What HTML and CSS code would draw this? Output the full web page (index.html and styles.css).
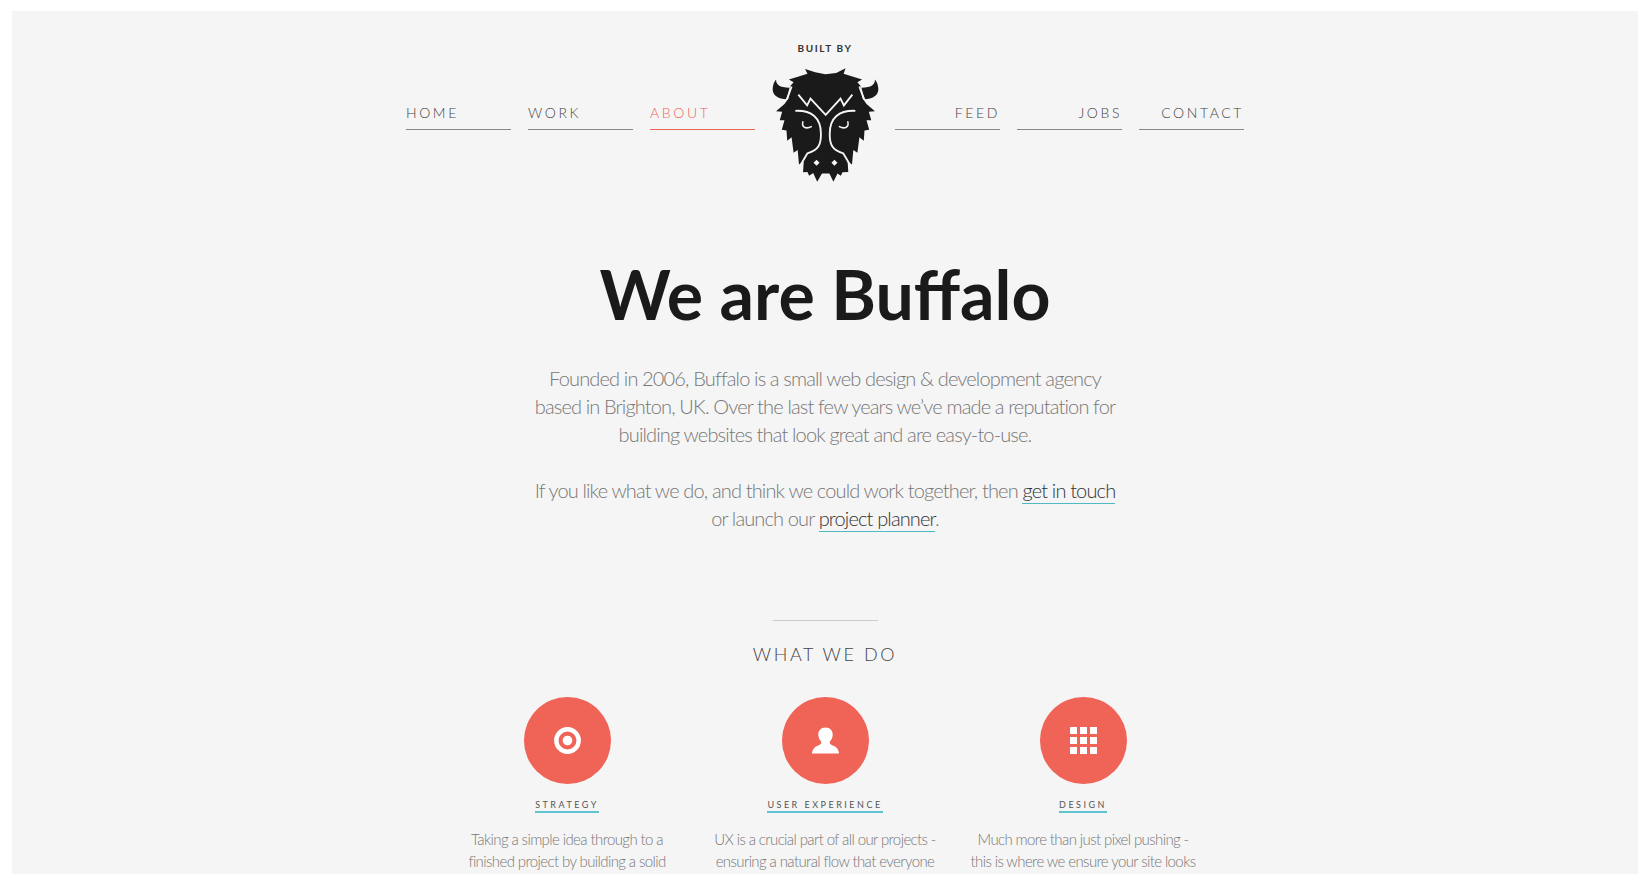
FILE: index.html
```html
<!DOCTYPE html>
<html lang="en">
<head>
    <meta charset="UTF-8">
    <meta name="viewport" content="width=device-width, initial-scale=1.0">
    <title>About - Buffalo</title>
    <link rel="stylesheet" href="styles.css">
</head>
<body>
    <div class="page">
        <!-- Main navigation, logo sits in the middle -->
        <header class="header">
            <nav class="nav nav-left">
                <a href="#">Home</a>
                <a href="#">Work</a>
                <a href="#" class="active">About</a>
            </nav>
            <div class="logo">
                <span class="built-by">Built by</span>
                <svg class="bison" viewBox="98 113 317 342" aria-hidden="true">
                    <path class="bison-fill" d="M196 118 L226 128 L256 134 L288 130 L316 116 L310 132 L336 140 L365 149 L351 157 L360 168 L366 205 L378 222 L403 243 L385 245 L392 270 L378 270 L386 298 L372 300 L370 331 L357 320 L351 366 L339 358 L335 401 L322 392 L324 423 L307 424 L302 434 L292 428 L280 452 L268 428 L246 428 L232 452 L220 426 L208 434 L203 423 L190 424 L192 392 L178 401 L174 358 L162 366 L156 320 L143 331 L141 300 L127 298 L135 270 L121 270 L128 245 L110 243 L135 222 L147 205 L153 168 L162 157 L148 149 L177 140 L203 132 Z"/>
                    <path class="bison-fill" d="M110 149 C110 165 120 172 150 174 L141 208 C118 206 100 198 100 178 C100 166 104 156 110 149 Z"/>
                    <path class="bison-fill" d="M403 149 C403 165 393 172 363 174 L372 208 C395 206 413 198 413 178 C413 166 409 156 403 149 Z"/>
                    <path class="bison-line" d="M156 170 C151 185 147 197 141 209"/>
                    <path class="bison-line" d="M357 170 C362 185 366 197 372 209"/>
                    <path class="bison-line" d="M176 194 L202 226 L212 206 L257 254 L301 206 L311 226 L336 194"/>
                    <path class="bison-line" d="M167 242 C215 240 243 262 243 310 C243 340 238 358 203 368 L183 402"/>
                    <path class="bison-line" d="M345 242 C297 240 269 262 269 310 C269 340 274 358 309 368 L329 402"/>
                    <path class="bison-line thin" d="M190 273 C184 290 198 298 216 288"/>
                    <path class="bison-line thin" d="M322 273 C328 290 314 298 296 288"/>
                    <path class="bison-dot" d="M230 387 L239 396 L230 405 L221 396 Z"/>
                    <path class="bison-dot" d="M283 387 L292 396 L283 405 L274 396 Z"/>
                </svg>
            </div>
            <nav class="nav nav-right">
                <a href="#">Feed</a>
                <a href="#">Jobs</a>
                <a href="#">Contact</a>
            </nav>
        </header>

        <!-- Intro -->
        <section class="intro">
            <h1>We are Buffalo</h1>
            <p>Founded in 2006, Buffalo is a small web design &amp; development agency<br>based in Brighton, UK. Over the last few years we’ve made a reputation for<br>building websites that look great and are easy-to-use.</p>
            <p>If you like what we do, and think we could work together, then <a href="#">get in touch</a><br>or launch our <a href="#">project planner</a>.</p>
        </section>

        <!-- Services -->
        <section class="services">
            <h2>What we do</h2>
            <div class="service-list">
                <div class="service">
                    <div class="service-icon">
                        <svg viewBox="0 0 28 28" aria-hidden="true">
                            <circle cx="14" cy="14" r="11.600" fill="none" stroke="#fff" stroke-width="4.600"/>
                            <circle cx="14" cy="14" r="5" fill="#fff"/>
                        </svg>
                    </div>
                    <h3><a href="#">Strategy</a></h3>
                    <p>Taking a simple idea through to a<br>finished project by building a solid</p>
                </div>
                <div class="service">
                    <div class="service-icon">
                        <svg viewBox="0 0 28 28" aria-hidden="true">
                            <path fill="#fff" d="M14 0.500 C19 0.500 21.500 4 21.500 8 C21.500 11 20 13.500 18.500 15 C18 17 19 18 21.500 19.200 C25 20.500 27.500 22.500 28 27.500 L0 27.500 C0.500 22.500 3 20.500 6.500 19.200 C9 18 10 17 9.500 15 C8 13.500 6.500 11 6.500 8 C6.500 4 9 0.500 14 0.500 Z"/>
                        </svg>
                    </div>
                    <h3><a href="#">User experience</a></h3>
                    <p>UX is a crucial part of all our projects -<br>ensuring a natural flow that everyone</p>
                </div>
                <div class="service">
                    <div class="service-icon">
                        <div class="grid-icon">
                            <span></span><span></span><span></span>
                            <span></span><span></span><span></span>
                            <span></span><span></span><span></span>
                        </div>
                    </div>
                    <h3><a href="#">Design</a></h3>
                    <p>Much more than just pixel pushing -<br>this is where we ensure your site looks</p>
                </div>
            </div>
        </section>
    </div>
</body>
</html>
```

FILE: styles.css
```css
html, body {
    margin: 0;
    padding: 0;
    height: 100%;
    background: #fff;
}
body {
    padding: 11px 12px 0;
    box-sizing: border-box;
    overflow: hidden;
    font-family: Lato, "Open Sans", sans-serif;
    font-weight: 300;
    color: #777;
}
a {
    color: inherit;
    text-decoration: none;
}
.page {
    height: 100%;
    background: #f5f5f5;
    overflow: hidden;
}

/* header */
.header {
    display: flex;
    justify-content: center;
    align-items: flex-start;
    padding-top: 31px;
}
.nav {
    display: flex;
    gap: 17px;
    margin-top: 59px;
}
.nav a {
    display: block;
    width: 105px;
    height: 28px;
    line-height: 24px;
    font-size: 14px;
    letter-spacing: 2.6px;
    text-transform: uppercase;
    color: #444;
    border-bottom: 1px solid #888;
}
.nav a.active {
    color: #f16355;
    border-bottom-color: #f16355;
}
.nav-right a {
    text-align: right;
}
.logo {
    width: 140px;
    display: flex;
    flex-direction: column;
    align-items: center;
}
.built-by {
    font-size: 10px;
    font-weight: 700;
    line-height: 12px;
    letter-spacing: 1.6px;
    text-transform: uppercase;
    color: #333;
}
.bison {
    width: 107px;
    height: 116px;
    margin-top: 13px;
}
.bison-fill {
    fill: #1a1a1a;
}
.bison-line {
    fill: none;
    stroke: #f5f5f5;
    stroke-width: 5.5;
}
.bison-line.thin {
    stroke-width: 4.5;
}
.bison-dot {
    fill: #f5f5f5;
}

/* intro */
.intro {
    text-align: center;
    margin-top: 68px;
}
.intro h1 {
    margin: 0 0 27px;
    font-size: 68px;
    line-height: 86px;
    font-weight: 700;
    color: #1a1a1a;
}
.intro p {
    margin: 0 0 28px;
    font-size: 20px;
    line-height: 28px;
    letter-spacing: -0.85px;
}
.intro p a {
    color: #333;
    padding-bottom: 1px;
    border-bottom: 1px solid #4fb9c6;
}

/* services */
.services {
    margin-top: 88px;
    text-align: center;
}
.services h2 {
    width: 105px;
    margin: 0 auto;
    padding-top: 21px;
    border-top: 1px solid #ccc;
    white-space: nowrap;
    display: flex;
    justify-content: center;
    font-size: 18px;
    line-height: 24px;
    font-weight: 300;
    letter-spacing: 2.6px;
    text-transform: uppercase;
    color: #444;
}
.service-list {
    display: flex;
    justify-content: center;
    margin-top: 31px;
}
.service {
    width: 258px;
}
.service-icon {
    width: 87px;
    height: 87px;
    margin: 0 auto;
    display: flex;
    align-items: center;
    justify-content: center;
    border-radius: 50%;
    background: #f06357;
}
.service-icon svg {
    width: 27px;
    height: 27px;
}
.grid-icon {
    display: grid;
    grid-template-columns: repeat(3, 7px);
    gap: 3px;
}
.grid-icon span {
    height: 7px;
    background: #fff;
}
.service h3 {
    margin: 15px 0 0;
    font-size: 9px;
    line-height: 12px;
    font-weight: 400;
    letter-spacing: 2.5px;
    text-transform: uppercase;
    color: #555;
}
.service h3 a {
    display: inline-block;
    border-bottom: 2px solid #5fc3d0;
}
.service p {
    margin: 15px 0 0;
    font-size: 15px;
    line-height: 22px;
    letter-spacing: -0.6px;
}
```
